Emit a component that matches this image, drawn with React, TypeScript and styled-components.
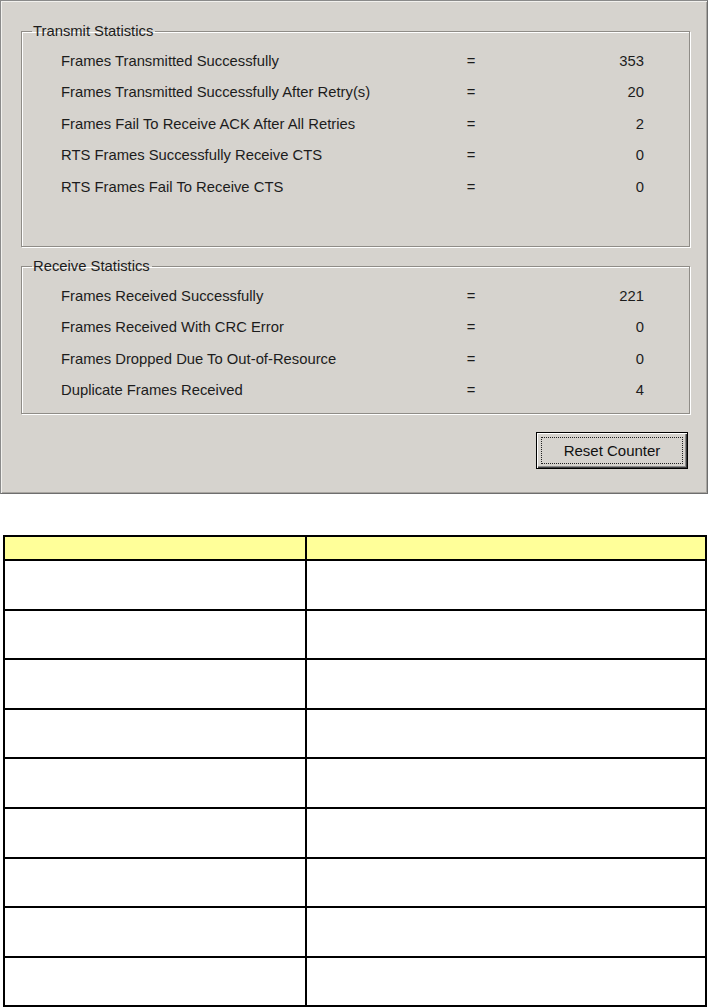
import React from 'react';
import styled, { createGlobalStyle } from 'styled-components';

const GlobalStyle = createGlobalStyle`
  body {
    margin: 0;
    background: #ffffff;
    font-family: "Liberation Sans", Arial, sans-serif;
  }
`;

const Page = styled.div`
  width: 710px;
  height: 1008px;
  overflow: hidden;
`;

const Panel = styled.div`
  box-sizing: border-box;
  width: 708px;
  height: 494px;
  background: #d6d3ce;
  border: 1px solid #8a8a8a;
  border-right-color: #6e6e6e;
  border-bottom-color: #6e6e6e;
  box-shadow: inset 1px 1px #f2f1ee, inset -1px -1px #a9a6a1;
  padding: 22px 17px 0 20px;
  display: flex;
  flex-direction: column;
`;

const Group = styled.fieldset<{ $height: number; $gap?: number }>`
  box-sizing: border-box;
  margin: ${(p) => p.$gap ?? 0}px 0 0 0;
  height: ${(p) => p.$height}px;
  padding: 6px 0 0 0;
  border: 1px solid #8f8c87;
  box-shadow: 1px 1px #ffffff, inset 1px 1px #ffffff;
  min-width: 0;
`;

const Legend = styled.legend`
  margin-left: 10px;
  padding: 0 2px 0 1px;
  font-size: 14.8px;
  line-height: 16px;
  color: #1c1c1c;
`;

const Rows = styled.div`
  padding-left: 39px;
`;

const StatRow = styled.div<{ $h: number }>`
  display: grid;
  grid-template-columns: 405px 10px 168px;
  height: ${(p) => p.$h}px;
  align-items: center;
  font-size: 14.8px;
  color: #1c1c1c;
`;

const Label = styled.span`
  white-space: nowrap;
`;

const Eq = styled.span`
  text-align: center;
`;

const Value = styled.span`
  text-align: right;
`;

const ButtonRow = styled.div`
  display: flex;
  justify-content: flex-end;
  padding: 18px 2px 0 0;
`;

const Button = styled.button`
  box-sizing: border-box;
  width: 152px;
  height: 37px;
  padding: 4px;
  background: #d6d3ce;
  border: 1px solid #000000;
  box-shadow: inset 1px 1px #ffffff, inset -1px -1px #3c3c3c, inset -2px -2px #8a8a8a;
  font-family: "Liberation Sans", Arial, sans-serif;
  font-size: 15px;
  color: #111111;
  display: flex;
`;

const Focus = styled.span`
  flex: 1;
  display: flex;
  align-items: center;
  justify-content: center;
  border: 1px dotted #222222;
`;

const Table = styled.table`
  margin: 41px 0 0 3px;
  width: 704px;
  border-collapse: collapse;
  table-layout: fixed;
`;

const HeadCell = styled.th<{ $w?: number }>`
  height: 22px;
  padding: 0;
  background: #ffff99;
  border: 2px solid #000000;
  width: ${(p) => (p.$w ? `${p.$w}px` : 'auto')};
`;

const Cell = styled.td`
  height: 47.6px;
  padding: 0;
  border: 2px solid #000000;
  background: #ffffff;
`;

const transmit = [
  ['Frames Transmitted Successfully', '353'],
  ['Frames Transmitted Successfully After Retry(s)', '20'],
  ['Frames Fail To Receive ACK After All Retries', '2'],
  ['RTS Frames Successfully Receive CTS', '0'],
  ['RTS Frames Fail To Receive CTS', '0'],
];

const receive = [
  ['Frames Received Successfully', '221'],
  ['Frames Received With CRC Error', '0'],
  ['Frames Dropped Due To Out-of-Resource', '0'],
  ['Duplicate Frames Received', '4'],
];

function App() {
  return (
    <Page>
      <GlobalStyle />
      <Panel>
        <Group $height={224}>
          <Legend>Transmit Statistics</Legend>
          <Rows>
            {transmit.map(([label, value]) => (
              <StatRow key={label} $h={31.5}>
                <Label>{label}</Label>
                <Eq>=</Eq>
                <Value>{value}</Value>
              </StatRow>
            ))}
          </Rows>
        </Group>
        <Group $height={156} $gap={11}>
          <Legend>Receive Statistics</Legend>
          <Rows>
            {receive.map(([label, value]) => (
              <StatRow key={label} $h={31.5}>
                <Label>{label}</Label>
                <Eq>=</Eq>
                <Value>{value}</Value>
              </StatRow>
            ))}
          </Rows>
        </Group>
        <ButtonRow>
          <Button>
            <Focus>Reset Counter</Focus>
          </Button>
        </ButtonRow>
      </Panel>
      <Table>
        <thead>
          <tr>
            <HeadCell $w={300} />
            <HeadCell />
          </tr>
        </thead>
        <tbody>
          {Array.from({ length: 9 }).map((_, i) => (
            <tr key={i}>
              <Cell />
              <Cell />
            </tr>
          ))}
        </tbody>
      </Table>
    </Page>
  );
}

export default App;
